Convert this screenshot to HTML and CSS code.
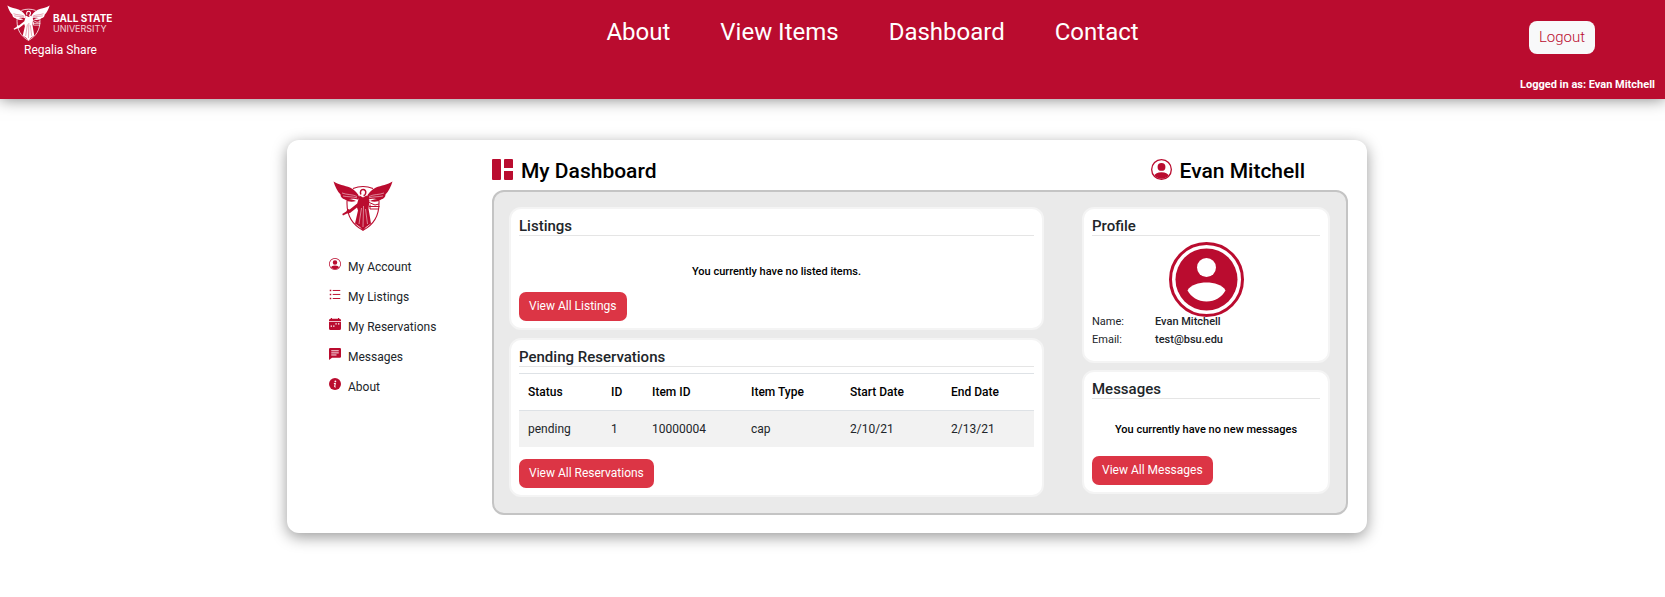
FILE: index.html
```html
<!DOCTYPE html>
<html lang="en">
<head>
<meta charset="utf-8">
<meta name="viewport" content="width=device-width, initial-scale=1">
<title>Regalia Share - My Dashboard</title>
<link rel="stylesheet" href="styles.css">
</head>
<body>
<svg class="sprite" aria-hidden="true">
  <symbol id="angel" viewBox="0 0 60 50">
    <g fill="currentColor">
      <path d="M.5.5C5 3.500 12 4.500 17 6.500c5 2.500 8 6 9.500 10l-1.500 2c-3-1-6-.8-9-.3 2.500 0 5 .6 7 1.800-4 1.200-8.500.8-11-1.500C9 17.500 7.500 16 7.500 13.500 4.500 10.500 2 5.500.5.500z"/>
      <path d="M59.500.5C55 3.500 48 4.500 43 6.500c-5 2.500-8 6-9.500 10l1.500 2c3-1 6-.8 9-.3-2.500 0-5 .6-7 1.800 4 1.200 8.500.8 11-1.500 3-1 4.500-2.500 4.500-5 3-3 5.500-8 7-13z"/>
      <path d="M26.500 14.500l3.500 2 3.500-2 3 5-1 8 2.500 15-5 3.500-3 3.500-3-3.500-5-3.500 3-13-1-3-7 5.500-3 .5-4 2-.8-1.500 4-2.500 1.500-2.500 2 .5 7.500-6z"/>
    </g>
    <g fill="none" stroke="currentColor">
      <path d="M20 7.500c6-2.400 14-2.400 20 0M14 20v2.500C14 34 19 43.500 30 49.300 41 43.500 46 34 46 22.500V20" stroke-width="1.100"/>
      <path d="M27.800 13.500c-1-3 .2-5 2.200-5s3 1.500 2.700 3.500c-.2 1.500-1.200 2.500-2.200 2.500" stroke-width="1.500"/>
      <path d="M35 21l7 3 4-1M36 25.500h10.500M37 28h9M37 23.500v4.500" stroke-width="1"/>
    </g>
    <path class="fold" d="M28.500 27L26 43M30.500 25l-.5 21M32.500 28l2 15M10 15c5 1 9 .5 14 1.800M50 15c-5 1-9 .5-14 1.800M9 12c5 2 10 1 15 3.500M51 12c-5 2-10 1-15 3.500" fill="none" stroke-width=".5"/>
  </symbol>
  <symbol id="person" viewBox="0 0 16 16">
    <path fill="currentColor" d="M13.468 12.370C12.758 11.226 11.195 10 8 10s-4.757 1.225-5.468 2.370A6.987 6.987 0 0 0 8 15a6.987 6.987 0 0 0 5.468-2.630zM8 9a3 3 0 1 0 0-6 3 3 0 0 0 0 6z"/>
    <path fill="currentColor" fill-rule="evenodd" d="M8 1a7 7 0 1 0 0 14A7 7 0 0 0 8 1zM0 8a8 8 0 1 1 16 0A8 8 0 0 1 0 8z"/>
  </symbol>
</svg>

<header class="site-header">
  <div class="brand">
    <div class="brand-logo">
      <svg class="brand-mark" aria-hidden="true"><use href="#angel"/></svg>
      <div class="wordmark"><span class="word-top">BALL STATE</span><span class="word-bottom">UNIVERSITY</span></div>
    </div>
    <div class="brand-name">Regalia Share</div>
  </div>
  <nav class="main-nav" aria-label="Main">
    <a href="#">About</a>
    <a href="#">View Items</a>
    <a href="#">Dashboard</a>
    <a href="#">Contact</a>
  </nav>
  <div class="session">
    <button type="button" class="logout">Logout</button>
    <div class="logged-in">Logged in as: Evan Mitchell</div>
  </div>
</header>

<main class="shell">
  <aside class="sidebar">
    <svg class="side-logo" aria-hidden="true"><use href="#angel"/></svg>
    <nav class="side-nav" aria-label="Account">
      <a href="#"><svg viewBox="0 0 16 16" aria-hidden="true"><use href="#person"/></svg>My Account</a>
      <a href="#"><svg viewBox="0 0 16 16" aria-hidden="true"><path d="M5 3.300h10M5 8.600h10M5 14h10" stroke="currentColor" stroke-width="1.300"/><path d="M1 3.300h2M1 8.600h2M1 14h2" stroke="currentColor" stroke-width="2"/></svg>My Listings</a>
      <a href="#"><svg viewBox="0 0 16 16" aria-hidden="true"><path fill="currentColor" fill-rule="evenodd" d="M2.500 0h1.500v1h8V0h1.500v1H14a2 2 0 0 1 2 2v1H0V3a2 2 0 0 1 2-2h.5zM0 5h16v9a2 2 0 0 1-2 2H2a2 2 0 0 1-2-2zM8.500 7v1.800h1.800V7zm3.500 0v1.800h1.800V7zM2.200 10v1.800H4V10zm3.300 0v1.800h1.800V10z"/></svg>My Reservations</a>
      <a href="#"><svg viewBox="0 0 16 16" aria-hidden="true"><path fill="currentColor" d="M1.500 0h13A1.500 1.500 0 0 1 16 1.500v10a1.500 1.500 0 0 1-1.500 1.500H4l-4 3V1.500A1.500 1.500 0 0 1 1.500 0z"/><path d="M3 3.700h10M3 6.500h10M3 9.300h7" stroke="#fff" stroke-width="1.200"/></svg>Messages</a>
      <a href="#"><svg viewBox="0 0 16 16" aria-hidden="true"><circle cx="8" cy="8" r="8" fill="currentColor"/><circle cx="8.500" cy="4.500" r="1.200" fill="#fff"/><path d="M6.500 7.200h1.900l-.8 4c-.1.700.5.800 1.200.4" stroke="#fff" stroke-width="1.400" fill="none"/></svg>About</a>
    </nav>
  </aside>

  <div class="content">
    <div class="title-row">
      <h1><svg viewBox="0 0 21 21" aria-hidden="true"><path fill="currentColor" d="M1 0h7a1 1 0 0 1 1 1v19a1 1 0 0 1-1 1H1a1 1 0 0 1-1-1V1a1 1 0 0 1 1-1zM13 0h7a1 1 0 0 1 1 1v8h-9V1a1 1 0 0 1 1-1zM12 12h9v8a1 1 0 0 1-1 1h-7a1 1 0 0 1-1-1z"/></svg>My Dashboard</h1>
      <h2><svg viewBox="0 0 16 16" aria-hidden="true"><use href="#person"/></svg>Evan Mitchell</h2>
    </div>

    <div class="panel">
      <div class="column column-main">
        <section class="card">
          <h3>Listings</h3>
          <p class="empty">You currently have no listed items.</p>
          <button type="button" class="action">View All Listings</button>
        </section>
        <section class="card">
          <h3>Pending Reservations</h3>
          <table class="reservations">
            <thead>
              <tr><th class="c-status">Status</th><th class="c-id">ID</th><th class="c-item">Item ID</th><th class="c-type">Item Type</th><th class="c-start">Start Date</th><th class="c-end">End Date</th></tr>
            </thead>
            <tbody>
              <tr><td>pending</td><td>1</td><td>10000004</td><td>cap</td><td>2/10/21</td><td>2/13/21</td></tr>
            </tbody>
          </table>
          <button type="button" class="action">View All Reservations</button>
        </section>
      </div>

      <div class="column column-side">
        <section class="card profile">
          <h3>Profile</h3>
          <svg class="avatar" viewBox="0 0 75 75" role="img" aria-label="Profile picture">
            <circle cx="37.500" cy="37.500" r="36" fill="#fff" stroke="currentColor" stroke-width="3"/>
            <circle cx="37.500" cy="37.500" r="31" fill="currentColor"/>
            <circle cx="37.500" cy="25.500" r="9.500" fill="#fff"/>
            <path fill="#fff" d="M18.500 48.500C21 43 30 40.500 37.500 40.500S54 43 56.500 48.500C53 55 46 59.500 37.500 59.500S22 55 18.500 48.500z"/>
          </svg>
          <dl class="details">
            <dt>Name:</dt><dd>Evan Mitchell</dd>
            <dt>Email:</dt><dd>test@bsu.edu</dd>
          </dl>
        </section>
        <section class="card messages">
          <h3>Messages</h3>
          <p class="empty">You currently have no new messages</p>
          <button type="button" class="action">View All Messages</button>
        </section>
      </div>
    </div>
  </div>
</main>
</body>
</html>
```
FILE: styles.css
```css
:root {
  --cardinal: #ba0c2f;
  --danger: #dc3545;
  --ink: #212529;
}

* {
  box-sizing: border-box;
}

body {
  margin: 0;
  background: #fff;
  color: var(--ink);
  font-family: Roboto, "Liberation Sans", sans-serif;
  font-size: 12px;
}

h1, h2, h3, p, dl, dd {
  margin: 0;
}

a {
  color: inherit;
  text-decoration: none;
}

button {
  border: 0;
  font-family: inherit;
  cursor: pointer;
}

.sprite {
  display: block;
  width: 0;
  height: 0;
}

.fold {
  stroke: var(--fold, #fff);
}

/* Header */
.site-header {
  display: grid;
  grid-template-columns: 1fr auto 1fr;
  min-height: 99px;
  background: var(--cardinal);
  color: #fff;
  box-shadow: 0 0 15px rgba(0, 0, 0, 0.5);
}

.brand {
  width: 112px;
  padding-top: 4px;
}

.brand-logo {
  display: flex;
  gap: 3px;
  padding-left: 7px;
}

.brand-mark {
  --fold: var(--cardinal);
  flex: none;
  width: 43px;
  height: 38px;
}

.wordmark {
  display: flex;
  flex-direction: column;
  padding-top: 9px;
  font-family: Inter, Roboto, sans-serif;
  white-space: nowrap;
}

.word-top {
  font-size: 10px;
  font-weight: 700;
  line-height: 11px;
}

.word-bottom {
  font-size: 9px;
  line-height: 9px;
  opacity: 0.8;
}

.brand-name {
  padding-left: 24px;
  line-height: 16px;
}

.main-nav {
  display: flex;
  gap: 50px;
  padding: 16px 0 0 80px;
  font-size: 24px;
  line-height: 32px;
}

.session {
  display: flex;
  flex-direction: column;
  align-items: flex-end;
  padding: 21px 10px 0 0;
}

.logout {
  margin-right: 60px;
  padding: 0 10px;
  border-radius: 8px;
  background: #f8f9fa;
  color: var(--cardinal);
  font-size: 15px;
  font-weight: 300;
  line-height: 33px;
}

.logged-in {
  margin-top: 23px;
  font-size: 11px;
  font-weight: 700;
  line-height: 16px;
}

/* Dashboard shell */
.shell {
  display: grid;
  grid-template-columns: 205px 1fr;
  margin: 41px 298px 64px 287px;
  padding: 0 19px 18px 0;
  border-radius: 12px;
  background: #fff;
  box-shadow: 0 4px 15px rgba(0, 0, 0, 0.4);
}

.sidebar {
  padding: 41px 0 0 42px;
}

.side-logo {
  display: block;
  width: 60px;
  height: 50px;
  margin-left: 4px;
  color: var(--cardinal);
}

.side-nav {
  display: flex;
  flex-direction: column;
  margin-top: 21px;
}

.side-nav a {
  display: flex;
  align-items: center;
  gap: 7px;
  line-height: 30px;
}

.side-nav svg {
  width: 12px;
  height: 12px;
  margin-bottom: 6px;
  color: var(--cardinal);
}

.title-row {
  display: flex;
  justify-content: space-between;
  padding: 18px 43px 6px 0;
  color: #000;
}

.title-row h1,
.title-row h2 {
  display: flex;
  gap: 8px;
  font-size: 21px;
  font-weight: 500;
  line-height: 26px;
}

.title-row svg {
  width: 21px;
  height: 21px;
  margin-top: 1px;
  color: var(--cardinal);
}

.panel {
  display: flex;
  gap: 38px;
  padding: 15px 16px 16px 15px;
  border: 2px solid #c4c4c4;
  border-radius: 12px;
  background: #eaeaea;
}

.column {
  display: flex;
  flex-direction: column;
  align-items: stretch;
  gap: 8px;
}

.column-main {
  flex: 535 1 0;
}

.column-side {
  flex: 248 1 0;
  gap: 7px;
}

/* Cards */
.card {
  padding: 8px 8px 7px;
  border: 2px solid #f4f4f4;
  border-radius: 12px;
  background: #fff;
}

.card h3 {
  border-bottom: 1px solid #e5e5e5;
  font-size: 15px;
  font-weight: 500;
  line-height: 18px;
}

.empty {
  margin: 28px 0 12px;
  color: #000;
  font-size: 11px;
  font-weight: 500;
  line-height: 16px;
  text-align: center;
}

.action {
  display: block;
  padding: 0 10px;
  border-radius: 7px;
  background: var(--danger);
  color: #fff;
  font-size: 12px;
  line-height: 29px;
}

.reservations {
  width: 100%;
  margin: 6px 0 12px;
  border-collapse: collapse;
  table-layout: fixed;
}

.reservations th,
.reservations td {
  padding: 0 9px;
  border-top: 1px solid #dee2e6;
  line-height: 36px;
  text-align: left;
}

.reservations th {
  color: #000;
  font-weight: 500;
}

.reservations td {
  background: #f2f2f2;
}

.c-status { width: 83px; }
.c-id { width: 41px; }
.c-item { width: 99px; }
.c-type { width: 99px; }
.c-start { width: 101px; }
.c-end { width: auto; }

.avatar {
  display: block;
  width: 75px;
  height: 75px;
  margin: 6px auto -4px;
  color: var(--cardinal);
}

.details {
  display: grid;
  grid-template-columns: 63px 1fr;
  padding-bottom: 5px;
  font-size: 11px;
  line-height: 18px;
}

.details dd {
  font-weight: 500;
}

.messages .empty {
  margin: 23px 0 18px;
}
```
